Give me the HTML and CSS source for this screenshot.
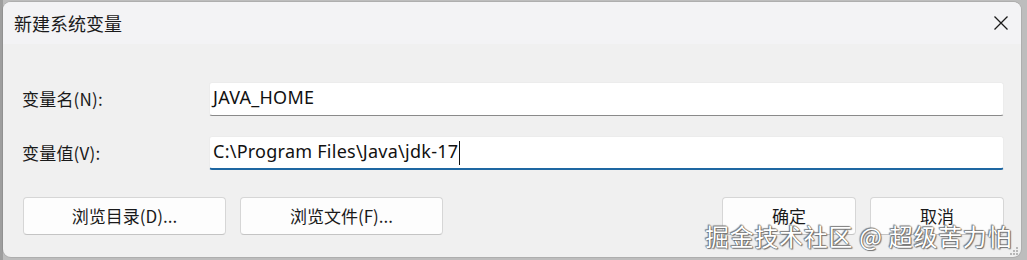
FILE: index.html
```html
<!DOCTYPE html>
<html lang="zh-CN">
<head>
<meta charset="utf-8">
<title>新建系统变量</title>
<link rel="stylesheet" href="styles.css">
</head>
<body>
<div class="desk">
  <div class="window">
    <div class="titlebar">
      <span class="title">新建系统变量</span>
      <span class="close" aria-label="关闭">
        <svg width="16" height="16" viewBox="0 0 16 16"><path d="M1.5 1.5 L14.5 14.5 M14.5 1.5 L1.5 14.5" stroke="#1a1a1a" stroke-width="1.3" fill="none"/></svg>
      </span>
    </div>
    <div class="content">
      <div class="field">
        <label class="label">变量名(N):</label>
        <div class="input">JAVA_HOME</div>
      </div>
      <div class="field">
        <label class="label">变量值(V):</label>
        <div class="input focused">C:\Program Files\Java\jdk-17<span class="caret"></span></div>
      </div>
      <div class="buttons">
        <div class="group">
          <button class="btn wide">浏览目录(D)...</button>
          <button class="btn wide">浏览文件(F)...</button>
        </div>
        <div class="group">
          <button class="btn">确定</button>
          <button class="btn">取消</button>
        </div>
      </div>
    </div>
    <svg class="grip" width="8" height="8" viewBox="0 0 8 8">
      <rect x="6" y="0" width="2" height="2" fill="#b8b8b8"/>
      <rect x="3" y="3" width="2" height="2" fill="#b8b8b8"/>
      <rect x="6" y="3" width="2" height="2" fill="#b8b8b8"/>
      <rect x="0" y="6" width="2" height="2" fill="#b8b8b8"/>
      <rect x="3" y="6" width="2" height="2" fill="#b8b8b8"/>
      <rect x="6" y="6" width="2" height="2" fill="#b8b8b8"/>
    </svg>
    <div class="watermark">掘金技术社区 @ 超级苦力怕</div>
  </div>
</div>
</body>
</html>
```
FILE: styles.css
```css
* { box-sizing: border-box; }
html, body { margin: 0; padding: 0; }
body {
  width: 1027px;
  height: 260px;
  overflow: hidden;
  background: #b4b4b4;
  font-family: "Segoe UI", "Noto Sans", "Noto Sans CJK SC", sans-serif;
  color: #1a1a1a;
}
.desk {
  padding: 2px 6px 3px 3px;
  height: 260px;
  background: linear-gradient(to right, #9e9e9e 0, #9e9e9e 3px, #bdbdbd 3px);
}
.window {
  position: relative;
  width: 1018px;
  height: 255px;
  background: #f0f0f0;
  border-radius: 8px;
  overflow: hidden;
  display: flex;
  flex-direction: column;
  box-shadow: 0 0 0 1px rgba(0,0,0,0.08);
}
.titlebar {
  height: 42px;
  flex: none;
  display: flex;
  align-items: center;
  justify-content: space-between;
  padding: 0 12px 0 11px;
  background: #f3f3f5;
}
.title {
  font-family: "Noto Sans CJK SC", sans-serif;
  font-size: 18px;
  padding-bottom: 1px;
}
.close {
  display: flex;
  width: 16px;
  height: 16px;
}
.content {
  flex: 1;
  padding: 38px 17px 0 19px;
  display: flex;
  flex-direction: column;
  gap: 20px;
}
.field {
  display: flex;
  align-items: center;
  height: 34px;
}
.label {
  width: 187px;
  flex: none;
  font-family: "Noto Sans CJK SC", sans-serif;
  font-size: 17px;
  letter-spacing: 0.2px;
  padding-bottom: 2px;
}
.input {
  flex: 1;
  height: 34px;
  background: #ffffff;
  border-radius: 3px;
  border: 1px solid #ececec;
  border-bottom: 1px solid #8a8a8a;
  padding: 0 3px 4px;
  display: flex;
  align-items: center;
  font-family: "Segoe UI", "Noto Sans", sans-serif;
  font-size: 18px;
  letter-spacing: 0.25px;
  color: #111;
  white-space: pre;
}
.input.focused {
  border-bottom: 2px solid #1e67a2;
  padding-bottom: 3px;
}
.caret {
  display: inline-block;
  width: 0;
  height: 24px;
  border-left: 1px solid #111;
  margin-left: 1px;
  margin-top: 3px;
}
.buttons {
  margin-top: 7px;
  display: flex;
  justify-content: space-between;
  padding-left: 1px;
}
.group {
  display: flex;
  gap: 14px;
}
.btn {
  width: 134px;
  height: 38px;
  background: #fdfdfd;
  border: 1px solid #d6d6d6;
  border-bottom-color: #c4c4c4;
  border-radius: 4px;
  font-family: "Noto Sans CJK SC", sans-serif;
  font-size: 17px;
  color: #1a1a1a;
  padding: 0 0 2px;
}
.btn.wide { width: 203px; }
.grip {
  position: absolute;
  right: 3px;
  bottom: 2px;
}
.watermark {
  position: absolute;
  left: 702px;
  top: 216px;
  font-family: "Noto Sans CJK SC", sans-serif;
  font-size: 24px;
  color: #ffffff;
  white-space: pre;
  letter-spacing: 0.7px;
  text-shadow: 0 0 1px #555, 0 0 1px #555, 1px 1px 1px #777, -1px -1px 1px #888;
}
```
